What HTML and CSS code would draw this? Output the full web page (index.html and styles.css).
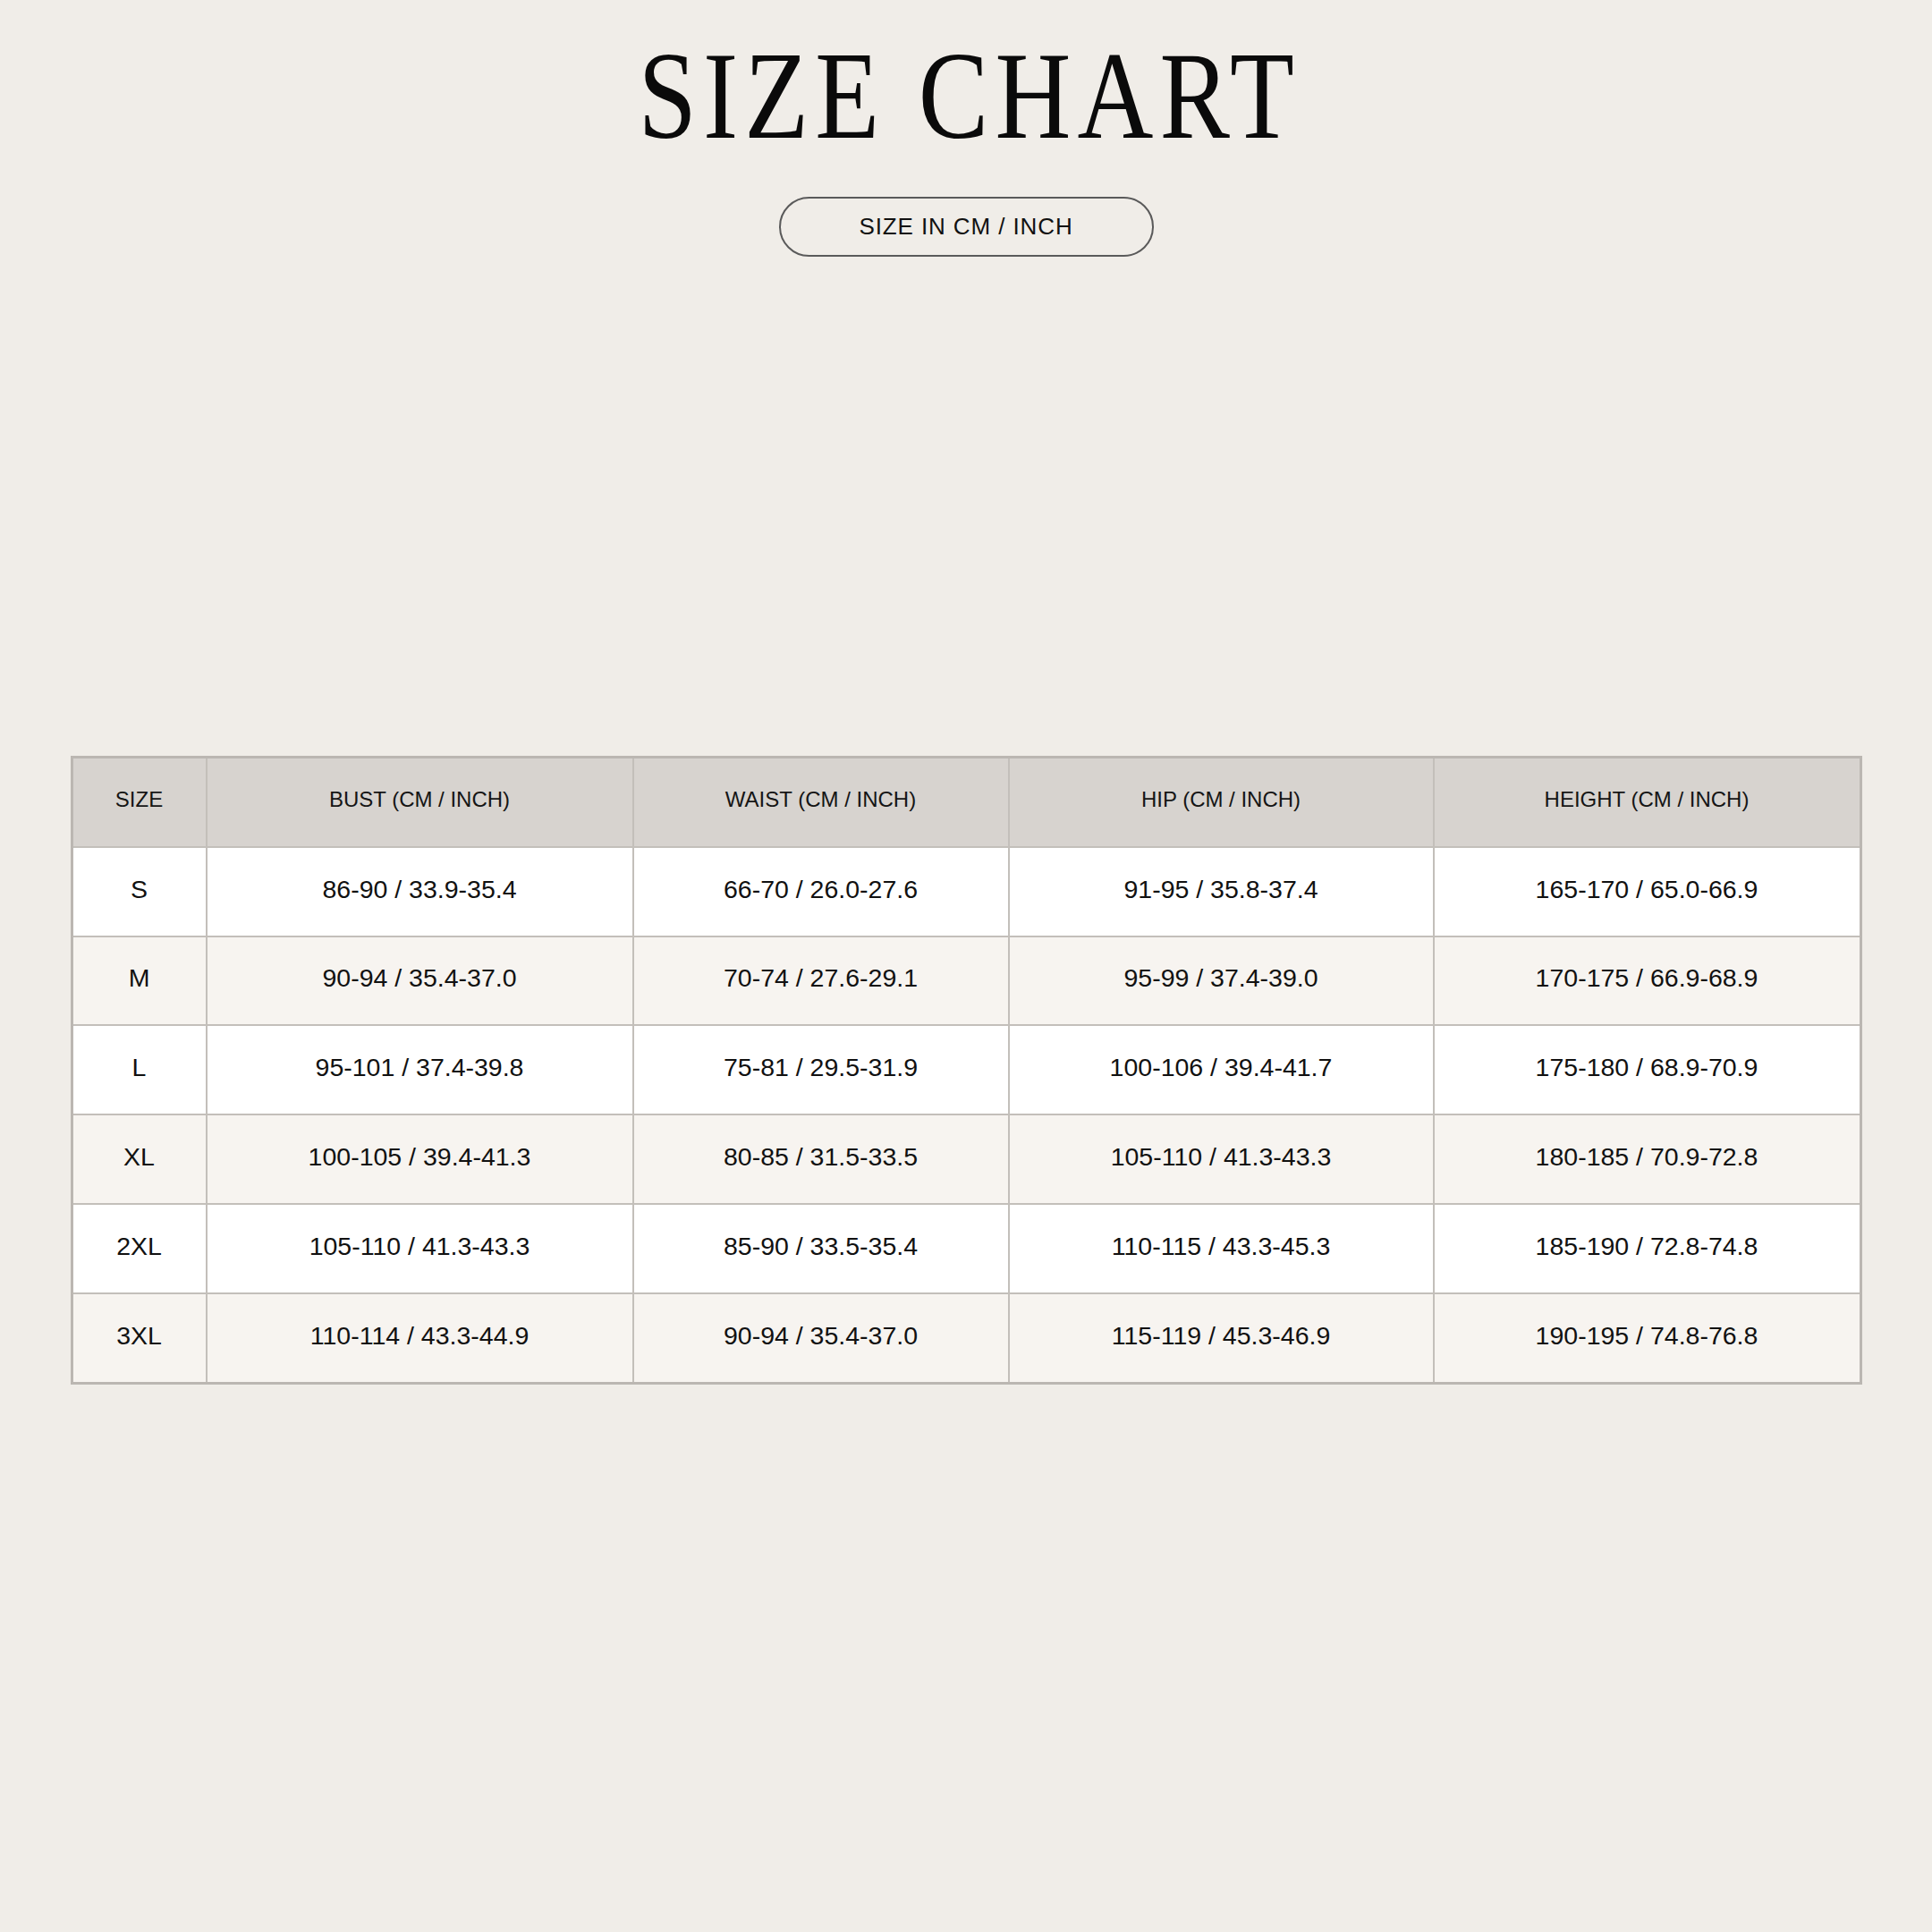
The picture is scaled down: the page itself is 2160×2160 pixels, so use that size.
FILE: index.html
```html
<!DOCTYPE html>
<html lang="en">
<head>
<meta charset="utf-8">
<title>Size Chart</title>
<link rel="stylesheet" href="styles.css">
</head>
<body>
<main class="page">
  <header class="head">
    <h1 class="title"><span class="title-text">SIZE CHART</span></h1>
    <div class="pill">SIZE IN CM / INCH</div>
  </header>
  <table class="chart">
    <colgroup>
      <col class="c-size">
      <col class="c-bust">
      <col class="c-waist">
      <col class="c-hip">
      <col class="c-height">
    </colgroup>
    <thead>
      <tr>
        <th>SIZE</th>
        <th>BUST (CM / INCH)</th>
        <th>WAIST (CM / INCH)</th>
        <th>HIP (CM / INCH)</th>
        <th>HEIGHT (CM / INCH)</th>
      </tr>
    </thead>
    <tbody>
      <tr><td>S</td><td>86-90 / 33.9-35.4</td><td>66-70 / 26.0-27.6</td><td>91-95 / 35.8-37.4</td><td>165-170 / 65.0-66.9</td></tr>
      <tr><td>M</td><td>90-94 / 35.4-37.0</td><td>70-74 / 27.6-29.1</td><td>95-99 / 37.4-39.0</td><td>170-175 / 66.9-68.9</td></tr>
      <tr><td>L</td><td>95-101 / 37.4-39.8</td><td>75-81 / 29.5-31.9</td><td>100-106 / 39.4-41.7</td><td>175-180 / 68.9-70.9</td></tr>
      <tr><td>XL</td><td>100-105 / 39.4-41.3</td><td>80-85 / 31.5-33.5</td><td>105-110 / 41.3-43.3</td><td>180-185 / 70.9-72.8</td></tr>
      <tr><td>2XL</td><td>105-110 / 41.3-43.3</td><td>85-90 / 33.5-35.4</td><td>110-115 / 43.3-45.3</td><td>185-190 / 72.8-74.8</td></tr>
      <tr><td>3XL</td><td>110-114 / 43.3-44.9</td><td>90-94 / 35.4-37.0</td><td>115-119 / 45.3-46.9</td><td>190-195 / 74.8-76.8</td></tr>
    </tbody>
  </table>
</main>
</body>
</html>
```

FILE: styles.css
```css
html, body {
  margin: 0;
  padding: 0;
  background: #f0ede8;
}

.page {
  width: 2160px;
  min-height: 2160px;
  box-sizing: border-box;
  padding: 37px 80px 0 80px;
  display: flex;
  flex-direction: column;
  align-items: center;
  font-family: "Liberation Sans", Arial, sans-serif;
  color: #111;
}

.head {
  display: flex;
  flex-direction: column;
  align-items: center;
}

.title {
  margin: 0;
  font-family: "Liberation Serif", "Times New Roman", serif;
  font-weight: 400;
  font-size: 140px;
  line-height: 140px;
  color: #0a0a0a;
  white-space: nowrap;
}

.title-text {
  display: inline-block;
  letter-spacing: 8.5px;
  margin-right: -8.5px;
  transform: scaleX(0.84);
}

.pill {
  margin-top: 43px;
  width: 419px;
  height: 67px;
  box-sizing: border-box;
  border: 2px solid #5a5a5a;
  border-radius: 34px;
  display: flex;
  align-items: center;
  justify-content: center;
  font-size: 26px;
  letter-spacing: 0.9px;
  color: #111;
}

.chart {
  margin-top: 558px;
  width: 2000px;
  table-layout: fixed;
  border-collapse: collapse;
  border: 3px solid #bbb7b2;
}

.c-size { width: 150.5px; }
.c-bust { width: 477px; }
.c-waist { width: 420px; }
.c-hip { width: 475px; }
.c-height { width: 477.5px; }

.chart th,
.chart td {
  border: 2px solid #c3bfba;
  height: 92.8px;
  padding: 0 0 5px 0;
  text-align: center;
  vertical-align: middle;
}

.chart th {
  background: #d7d3cf;
  font-weight: 400;
  font-size: 24px;
  color: #151515;
}

.chart td {
  font-size: 28.5px;
  color: #111;
}

.chart tbody tr:nth-child(odd) td {
  background: #ffffff;
}

.chart tbody tr:nth-child(even) td {
  background: #f7f4f0;
}
```
